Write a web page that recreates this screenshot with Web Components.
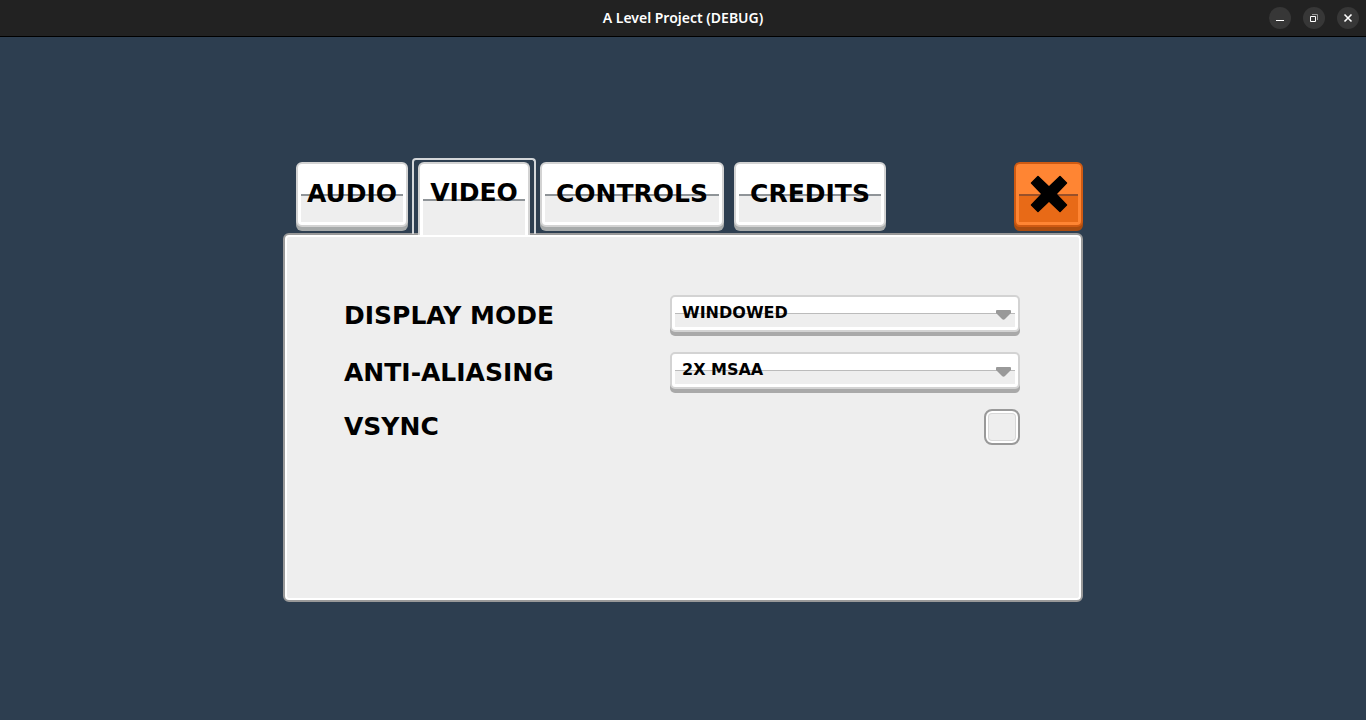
<!DOCTYPE html>
<html lang="en">
<head>
<meta charset="utf-8">
<meta name="viewport" content="width=device-width, initial-scale=1">
<title>A Level Project (DEBUG)</title>
<style>
  html, body { height: 100%; margin: 0; }
  body { background: #2d3e50; color: #000; font-family: "DejaVu Sans", sans-serif; }
</style>
</head>
<body>
<settings-app></settings-app>
<script>
const define = (name, html, setup) => {
  const template = document.createElement('template');
  template.innerHTML = html;
  customElements.define(name, class extends HTMLElement {
    constructor() {
      super();
      this.attachShadow({ mode: 'open' }).append(template.content.cloneNode(true));
    }
    connectedCallback() { if (setup) setup(this, this.shadowRoot); }
  });
};

define('window-bar', `
  <style>
    :host { display: grid; grid-template-columns: 1fr auto 1fr; align-items: center; height: 36px;
      background: #222; border-bottom: 1px solid #000; color: #fff; }
    h1 { grid-column: 2; margin: 0; font: 600 14px/20px "Noto Sans", sans-serif; }
    div { display: flex; justify-content: flex-end; gap: 12px; padding-right: 7px; }
    button { width: 22px; height: 22px; padding: 0; border: 0; border-radius: 50%; background: #373737; }
    svg { display: block; fill: none; stroke: #fff; }
  </style>
  <h1><slot></slot></h1>
  <div>
    <button aria-label="Minimise"><svg width="22" height="22"><path d="M7 13.5h8"/></svg></button>
    <button aria-label="Restore"><svg width="22" height="22"><path d="M9 7.5h5.5v5.5" stroke="#999"/><path d="M7.5 9.5h5v5h-5z"/></svg></button>
    <button aria-label="Close window"><svg width="22" height="22"><path d="M7.5 7.5l7 7m0-7l-7 7" stroke-width="1.6"/></svg></button>
  </div>`);

define('game-tab', `
  <style>
    :host { display: block; position: relative; --edge: #d3d3d3; --face: #fff; --low: #eee; --line: #8f9498; --depth: #a7aaaa; }
    :host([tone=orange]) { --edge: #cf5a12; --face: #ff8533; --low: #e86a17; --line: #98502a; --depth: #aa4c0f; }
    button { display: flex; align-items: center; justify-content: center; box-sizing: border-box;
      width: 100%; height: 65px; padding: 0 0 2px; color: #000;
      font: 700 25px/30px "DejaVu Sans", sans-serif;
      border: 2px solid var(--edge); border-radius: 6px; box-shadow: 0 4px var(--depth);
      background:
        linear-gradient(var(--line), var(--line)) 3px 30px / calc(100% - 6px) 2px no-repeat,
        linear-gradient(var(--low), var(--low)) 3px 32px / calc(100% - 6px) 26px no-repeat,
        var(--face); outline: 0; }
    :host([selected]) { z-index: 1; }
    :host([selected]) button { height: 73px; padding-bottom: 13px; box-shadow: none;
      border-bottom: 0; border-radius: 6px 6px 0 0;
      background:
        linear-gradient(var(--line), var(--line)) 3px 35px / calc(100% - 6px) 2px no-repeat,
        linear-gradient(var(--low), var(--low)) 3px 37px / calc(100% - 6px) 35px no-repeat,
        var(--face); }
    :host([selected])::before { content: ""; position: absolute; inset: -4px -6px -3px; box-sizing: border-box;
      border: 2px solid #d3d6d9; border-bottom: 0; border-radius: 4px 4px 0 0; pointer-events: none; }
  </style>
  <button type="button"><slot></slot></button>`, (host, root) => {
    const button = root.querySelector('button');
    if (host.hasAttribute('label')) button.setAttribute('aria-label', host.getAttribute('label'));
    else {
      button.setAttribute('role', 'tab');
      button.setAttribute('aria-selected', host.hasAttribute('selected'));
    }
  });

define('select-row', `
  <style>
    :host { display: flex; align-items: center; justify-content: space-between; height: 41px; }
    label { font: 700 25px/30px "DejaVu Sans", sans-serif; }
    span { position: relative; align-self: flex-start; width: 52%; max-width: 350px; }
    select { appearance: none; display: block; box-sizing: border-box; width: 100%; height: 37px;
      padding: 0 32px 1px 10px; margin: 0; color: #000; font: 700 16px/20px "DejaVu Sans", sans-serif;
      border: 2px solid #d3d3d3; border-radius: 5px; box-shadow: 0 4px #a9a9a9; outline: 0;
      background:
        linear-gradient(#bbb, #bbb) 3px 16px / calc(100% - 6px) 1px no-repeat,
        linear-gradient(#eee, #eee) 3px 17px / calc(100% - 6px) 13px no-repeat,
        #fff; }
    svg { position: absolute; right: 8px; top: 14px; pointer-events: none; }
  </style>
  <label for="choice"><slot></slot></label>
  <span><select id="choice"></select>
    <svg width="16" height="12" fill="#999"><path d="M1 1h13q1 0 1 1v2L9 10q-1.500 1.500-3 0L0 4V2q0-1 1-1z"/></svg></span>`, (host, root) => {
    const select = root.querySelector('select');
    select.replaceChildren(...host.getAttribute('options').split('|').map(text => new Option(text)));
    select.value = host.getAttribute('value');
  });

define('check-row', `
  <style>
    :host { display: flex; align-items: center; justify-content: space-between; height: 36px; }
    label { font: 700 25px/30px "DejaVu Sans", sans-serif; }
    input { appearance: none; box-sizing: border-box; width: 36px; height: 36px; margin: 0;
      border: 2px solid #999; border-radius: 8px; background: #eee;
      box-shadow: inset 0 0 0 2px #fff, inset 0 0 0 3px #d8d8d8; }
    input:checked { background: #999; }
  </style>
  <label for="toggle"><slot></slot></label><input id="toggle" type="checkbox">`);

define('settings-panel', `
  <style>
    :host { display: flex; flex-direction: column; gap: 16px; box-sizing: border-box; min-height: 369px;
      padding: 60px 61px 60px 59px; background: #eee; border: 2px solid #999; border-radius: 6px;
      box-shadow: inset 0 0 0 2px #fff; }
  </style>
  <slot></slot>`);

define('settings-app', `
  <style>
    :host { display: block; min-height: 100%; }
    main { box-sizing: border-box; max-width: 800px; margin: 0 auto; padding: 125px 0 60px; }
    nav { display: flex; gap: 10px; height: 69px; margin: 0 0 2px 13px; }
    .tabs { display: flex; gap: 10px; flex: 1; }
    .short { width: 112px; }
    .long { width: 184px; }
    .medium { width: 152px; }
    .close { width: 69px; }
    svg { display: block; }
  </style>
  <window-bar>A Level Project (DEBUG)</window-bar>
  <main>
    <nav aria-label="Settings">
      <div class="tabs" role="tablist">
        <game-tab class="short">AUDIO</game-tab>
        <game-tab class="short" selected>VIDEO</game-tab>
        <game-tab class="long">CONTROLS</game-tab>
        <game-tab class="medium">CREDITS</game-tab>
      </div>
      <game-tab class="close" tone="orange" label="Close settings">
        <svg width="38" height="38" viewBox="0 0 38 38"><path d="M1.500 8L8 1.500 19 12 30 1.500 36.500 8 26 19 36.500 30 30 36.500 19 26 8 36.500 1.500 30 12 19Z" stroke="#000" stroke-width="1.500" stroke-linejoin="round"/></svg>
      </game-tab>
    </nav>
    <settings-panel>
      <select-row options="WINDOWED|FULLSCREEN" value="WINDOWED">DISPLAY MODE</select-row>
      <select-row options="DISABLED|2X MSAA|4X MSAA|8X MSAA" value="2X MSAA">ANTI-ALIASING</select-row>
      <check-row>VSYNC</check-row>
    </settings-panel>
  </main>`);
</script>
</body>
</html>
